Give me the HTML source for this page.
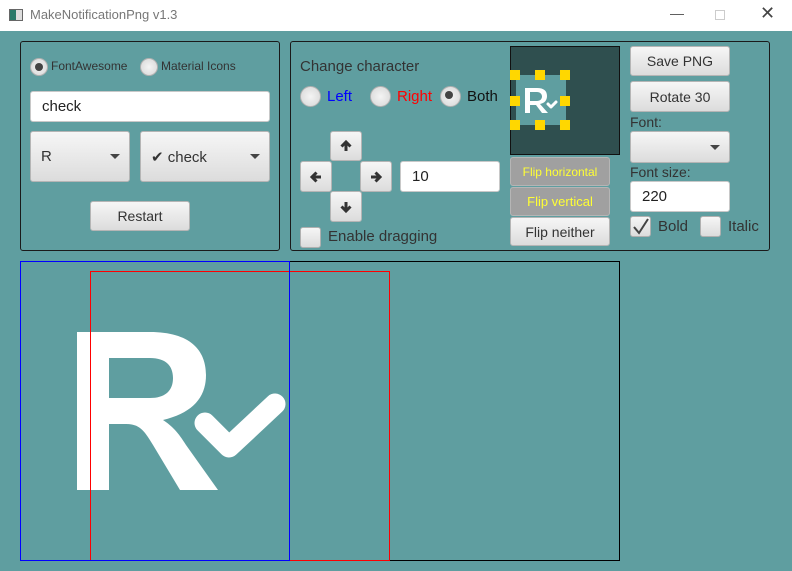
<!DOCTYPE html>
<html><head><style>
*{box-sizing:border-box;margin:0;padding:0}
body{width:792px;height:571px;background:#5f9ea0;font-family:"Liberation Sans",sans-serif;position:relative;overflow:hidden;color:#333}
.a{position:absolute}
.panel{position:absolute;border:1px solid #1a1a1a;border-radius:3px}
.btn{position:absolute;background:linear-gradient(#f6f6f6,#dcdcdc);border:1px solid #b5b5b5;border-radius:3px;display:flex;align-items:center;justify-content:center;font-size:14px;color:#333}
.field{position:absolute;background:#fff;border:1px solid #c8c8c8;border-radius:3px;font-size:15px;padding-left:11px;display:flex;align-items:center;color:#222}
.radio{position:absolute;width:18px;height:18px;border-radius:50%;background:radial-gradient(#f4f4f4,#d6d6d6);border:1px solid #b0b0b0}
.radio.on::after{content:"";position:absolute;left:4px;top:4px;width:8px;height:8px;border-radius:50%;background:#444}
.cb{position:absolute;width:21px;height:21px;background:linear-gradient(#f6f6f6,#dcdcdc);border:1px solid #b0b0b0;border-radius:3px}
.tri{position:absolute;width:0;height:0;border-left:5px solid transparent;border-right:5px solid transparent;border-top:5px solid #444}
.t{position:absolute;white-space:nowrap}
.h{position:absolute;width:10px;height:10px;background:#ffd700}
</style></head><body>
<div class="a" style="left:0;top:0;width:792px;height:31px;background:#fff"></div>
<div class="a" style="left:9px;top:9px;width:14px;height:12px;border:1px solid #666;background:linear-gradient(90deg,#2a7a6a 50%,#ddd 50%)"></div>
<div class="t" style="left:30px;top:7px;font-size:13px;color:#777">MakeNotificationPng v1.3</div>
<div class="t" style="left:670px;top:5px;font-size:14px;color:#555">—</div>
<div class="a" style="left:715px;top:10px;width:10px;height:10px;border:1px solid #ccc"></div>
<div class="t" style="left:760px;top:3px;font-size:18px;color:#444">✕</div>

<div class="panel" style="left:20px;top:41px;width:260px;height:210px"></div>
<div class="radio on" style="left:30px;top:58px"></div>
<div class="t" style="left:51px;top:59px;font-size:12px">FontAwesome</div>
<div class="radio" style="left:140px;top:58px"></div>
<div class="t" style="left:161px;top:59px;font-size:12px">Material Icons</div>
<div class="field" style="left:30px;top:91px;width:240px;height:31px">check</div>
<div class="btn" style="left:30px;top:131px;width:100px;height:51px;justify-content:flex-start;padding-left:10px;font-size:15px">R</div>
<div class="tri" style="left:110px;top:154px"></div>
<div class="btn" style="left:140px;top:131px;width:130px;height:51px;justify-content:flex-start;padding-left:10px;font-size:15px">✔&nbsp;check</div>
<div class="tri" style="left:250px;top:154px"></div>
<div class="btn" style="left:90px;top:201px;width:100px;height:30px">Restart</div>

<div class="panel" style="left:290px;top:41px;width:480px;height:210px"></div>
<div class="t" style="left:300px;top:58px;font-size:15px;color:#333">Change character</div>
<div class="radio" style="left:300px;top:86px;width:21px;height:21px"></div>
<div class="t" style="left:327px;top:88px;font-size:15px;color:#0000ff">Left</div>
<div class="radio" style="left:370px;top:86px;width:21px;height:21px"></div>
<div class="t" style="left:397px;top:88px;font-size:15px;color:#ff0000">Right</div>
<div class="radio on" style="left:440px;top:86px;width:21px;height:21px"></div>
<div class="t" style="left:467px;top:88px;font-size:15px;color:#111">Both</div>
<div class="btn" style="left:330px;top:131px;width:32px;height:30px"><svg width="14" height="14" viewBox="0 0 14 14"><path d="M7,12V3M2.5,7.5L7,3L11.5,7.5" fill="none" stroke="#333" stroke-width="3"/></svg></div>
<div class="btn" style="left:300px;top:161px;width:32px;height:31px"><svg width="14" height="14" viewBox="0 0 14 14"><path d="M12,7H3M7.5,2.5L3,7L7.5,11.5" fill="none" stroke="#333" stroke-width="3"/></svg></div>
<div class="btn" style="left:360px;top:161px;width:32px;height:31px"><svg width="14" height="14" viewBox="0 0 14 14"><path d="M2,7H11M6.5,2.5L11,7L6.5,11.5" fill="none" stroke="#333" stroke-width="3"/></svg></div>
<div class="btn" style="left:330px;top:191px;width:32px;height:31px"><svg width="14" height="14" viewBox="0 0 14 14"><path d="M7,2V11M2.5,6.5L7,11L11.5,6.5" fill="none" stroke="#333" stroke-width="3"/></svg></div>
<div class="field" style="left:400px;top:161px;width:100px;height:31px">10</div>
<div class="cb" style="left:300px;top:227px"></div>
<div class="t" style="left:328px;top:228px;font-size:15px;color:#333">Enable dragging</div>

<div class="a" style="left:510px;top:46px;width:110px;height:109px;background:#2f4f4f;border:1px solid #111"></div>
<div class="a" style="left:516px;top:75px;width:50px;height:50px;background:#5f9ea0"></div>
<svg class="a" style="left:516px;top:75px" width="50" height="50" viewBox="0 0 50 50">
<path fill="#fff" fill-rule="evenodd" d="M9,13 H21 C28,13 31,16 31,21 C31,25 29,28 24,29 L32,38 H26 L20,30 H14 V38 H9 Z M14,17 V26 H21 C24,26 26,24 26,21.5 C26,19 24,17 21,17 Z"/>
<path d="M32,29 L35,32 L40,27" fill="none" stroke="#fff" stroke-width="3" stroke-linecap="round" stroke-linejoin="round"/>
</svg>
<div class="h" style="left:510px;top:70px"></div><div class="h" style="left:535px;top:70px"></div><div class="h" style="left:560px;top:70px"></div>
<div class="h" style="left:510px;top:96px"></div><div class="h" style="left:560px;top:96px"></div>
<div class="h" style="left:510px;top:120px"></div><div class="h" style="left:535px;top:120px"></div><div class="h" style="left:560px;top:120px"></div>
<div class="btn" style="left:510px;top:157px;width:100px;height:29px;background:#a0a0a0;color:#ffff33;font-size:12px">Flip horizontal</div>
<div class="btn" style="left:510px;top:187px;width:100px;height:29px;background:#a0a0a0;color:#ffff33;font-size:13px">Flip vertical</div>
<div class="btn" style="left:510px;top:217px;width:100px;height:29px">Flip neither</div>

<div class="btn" style="left:630px;top:46px;width:100px;height:30px">Save PNG</div>
<div class="btn" style="left:630px;top:81px;width:100px;height:31px">Rotate 30</div>
<div class="t" style="left:630px;top:114px;font-size:14px">Font:</div>
<div class="btn" style="left:630px;top:131px;width:100px;height:32px"></div>
<div class="tri" style="left:710px;top:145px"></div>
<div class="t" style="left:630px;top:164px;font-size:14px">Font size:</div>
<div class="field" style="left:630px;top:181px;width:100px;height:31px">220</div>
<div class="cb" style="left:630px;top:216px"></div>
<svg class="a" style="left:630px;top:216px" width="21" height="21"><path d="M4,11 L9,17 L18,3" fill="none" stroke="#444" stroke-width="2"/></svg>
<div class="t" style="left:658px;top:218px;font-size:15px">Bold</div>
<div class="cb" style="left:700px;top:216px"></div>
<div class="t" style="left:728px;top:218px;font-size:15px">Italic</div>

<svg class="a" style="left:0;top:0" width="792" height="571">
<rect x="20.5" y="261.5" width="599" height="299" fill="none" stroke="#000"/>
<path fill="#fff" fill-rule="evenodd" d="M77,332 H150 C190,332 206,350 206,375 C206,398 192,413 163,420 C172,426 178,432 186,445 L218,490 H180 L153,445 C143,428 138,424 125,424 H109 V490 H77 Z M109,358 V398 H150 C166,398 173,390 173,378 C173,366 166,358 150,358 Z"/>
<path d="M205,423 L229,447 L275,404" fill="none" stroke="#fff" stroke-width="21" stroke-linecap="round" stroke-linejoin="round"/>
<rect x="90.5" y="271.5" width="299" height="289" fill="none" stroke="#f00"/>
<rect x="20.5" y="261.5" width="269" height="299" fill="none" stroke="#00f"/>
</svg>
</body></html>
